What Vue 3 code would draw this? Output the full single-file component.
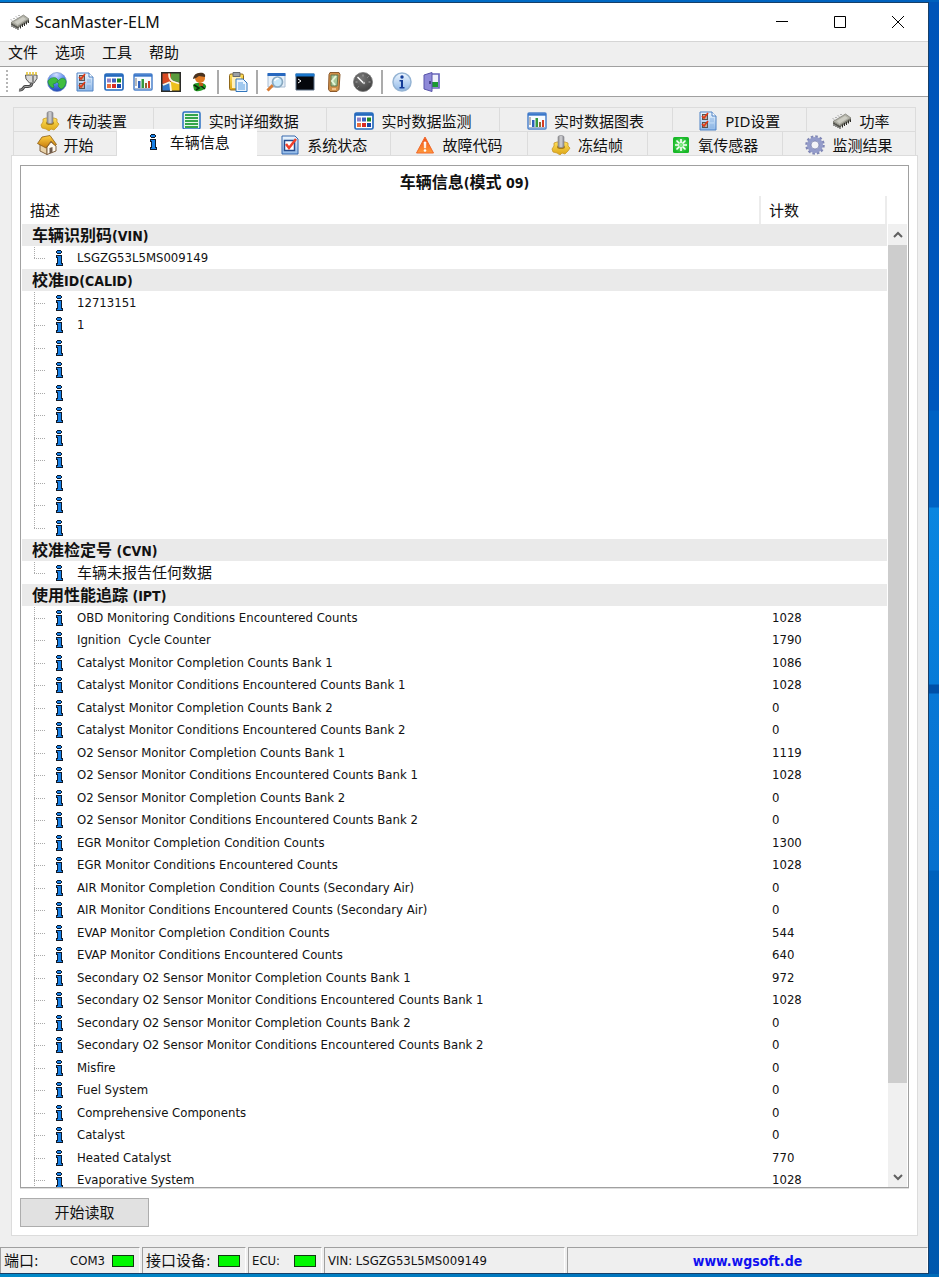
<script setup>
import { ref } from 'vue'

const menus = ['文件', '选项', '工具', '帮助']
const toolGroups = [
  { size: 'seven', items: [['plug', '连接'], ['globe', '网站'], ['checklist', 'PID设置'], ['grid', '实时数据监测'], ['chart', '实时数据图表'], ['squares', '面板'], ['person', '用户']] },
  { size: 'one', items: [['paste', '粘贴']] },
  { size: 'four', items: [['search', '查找'], ['terminal', '终端'], ['device', '设备'], ['gauge', '仪表']] },
  { size: 'two', items: [['about', '关于'], ['door', '退出']] }
]
const upperTabs = [
  ['knob', '传动装置'], ['list', '实时详细数据'], ['grid', '实时数据监测'],
  ['chart', '实时数据图表'], ['checklist', 'PID设置'], ['chip', '功率']
]
const lowerTabs = [
  ['house', '开始'], ['info', '车辆信息'], ['check', '系统状态'], ['warning', '故障代码'],
  ['knob', '冻结帧'], ['sensor', '氧传感器'], ['gear', '监测结果']
]
const activeTab = ref('车辆信息')

const sections = [
  { cjk: '车辆识别码', latin: '(VIN)', rows: [['LSGZG53L5MS009149', '']] },
  { cjk: '校准', latin: 'ID(CALID)', rows: [['12713151', ''], ['1', ''], ...Array.from({ length: 9 }, () => ['', ''])] },
  { cjk: '校准检定号', latin: ' (CVN)', chinese: true, rows: [['车辆未报告任何数据', '']] },
  {
    cjk: '使用性能追踪', latin: ' (IPT)', open: true, rows: [
      ['OBD Monitoring Conditions Encountered Counts', '1028'],
      ['Ignition  Cycle Counter', '1790'],
      ['Catalyst Monitor Completion Counts Bank 1', '1086'],
      ['Catalyst Monitor Conditions Encountered Counts Bank 1', '1028'],
      ['Catalyst Monitor Completion Counts Bank 2', '0'],
      ['Catalyst Monitor Conditions Encountered Counts Bank 2', '0'],
      ['O2 Sensor Monitor Completion Counts Bank 1', '1119'],
      ['O2 Sensor Monitor Conditions Encountered Counts Bank 1', '1028'],
      ['O2 Sensor Monitor Completion Counts Bank 2', '0'],
      ['O2 Sensor Monitor Conditions Encountered Counts Bank 2', '0'],
      ['EGR Monitor Completion Condition Counts', '1300'],
      ['EGR Monitor Conditions Encountered Counts', '1028'],
      ['AIR Monitor Completion Condition Counts (Secondary Air)', '0'],
      ['AIR Monitor Conditions Encountered Counts (Secondary Air)', '0'],
      ['EVAP Monitor Completion Condition Counts', '544'],
      ['EVAP Monitor Conditions Encountered Counts', '640'],
      ['Secondary O2 Sensor Monitor Completion Counts Bank 1', '972'],
      ['Secondary O2 Sensor Monitor Conditions Encountered Counts Bank 1', '1028'],
      ['Secondary O2 Sensor Monitor Completion Counts Bank 2', '0'],
      ['Secondary O2 Sensor Monitor Conditions Encountered Counts Bank 2', '0'],
      ['Misfire', '0'],
      ['Fuel System', '0'],
      ['Comprehensive Components', '0'],
      ['Catalyst', '0'],
      ['Heated Catalyst', '770'],
      ['Evaporative System', '1028']
    ]
  }
]
const lines = sections.flatMap(s => [
  { head: true, cjk: s.cjk, latin: s.latin },
  ...s.rows.map(([name, count], i) => ({ name, count, chinese: s.chinese, last: !s.open && i === s.rows.length - 1 }))
])
</script>

<template>
  <svg class="sprites" aria-hidden="true">
    <defs>
      <linearGradient id="g-blue" x1="0" y1="0" x2="0" y2="1"><stop offset="0" stop-color="#eef7ff" /><stop offset="1" stop-color="#8fb8e8" /></linearGradient>
      <linearGradient id="g-gold" x1="0" y1="0" x2="0" y2="1"><stop offset="0" stop-color="#ffe05a" /><stop offset="1" stop-color="#dba414" /></linearGradient>
      <linearGradient id="g-roof" x1="0" y1="0" x2="0" y2="1"><stop offset="0" stop-color="#ffd040" /><stop offset="1" stop-color="#c67a0c" /></linearGradient>
      <linearGradient id="g-steel" x1="0" y1="0" x2="1" y2="0"><stop offset="0" stop-color="#8a8a8a" /><stop offset=".5" stop-color="#d5d5d8" /><stop offset="1" stop-color="#85858c" /></linearGradient>
      <linearGradient id="g-orange" x1="0" y1="0" x2="0" y2="1"><stop offset="0" stop-color="#f04a18" /><stop offset="1" stop-color="#ff9a3a" /></linearGradient>
      <radialGradient id="g-globe" cx=".45" cy=".1" r=".9"><stop offset="0" stop-color="#d5e2ff" /><stop offset=".5" stop-color="#5b8cf0" /><stop offset="1" stop-color="#2148b4" /></radialGradient>
      <radialGradient id="g-sensor"><stop offset="0" stop-color="#8af08a" /><stop offset="1" stop-color="#18b828" /></radialGradient>
      <radialGradient id="g-gauge" cx=".4" cy=".3" r=".8"><stop offset="0" stop-color="#777" /><stop offset="1" stop-color="#3c3c3c" /></radialGradient>
    </defs>
    <symbol id="i-chip" viewBox="0 0 20 20">
      <path d="M1 10.500v2l6.500 4L19 9.500V7z" fill="#77776f" />
      <path d="M2 12v3M4 13v3M6 14v3M8 15v3M10.500 13.500v3M12.500 12v3M14.500 11v3M16.500 9.500v3M18.500 8.500v2.500" stroke="#2c2c28" />
      <path d="M1 10.500L13.500 3l5.500 4L7.500 14.500z" fill="#b2b2a8" stroke="#77776f" stroke-width=".7" /><path d="M4.500 10L13 5l3 2-8.500 5.500z" fill="#cdcdc4" />
      <path d="M2 8.500l-1-1M4.500 7l-1-1M7 5.500l-1-1M9.500 4l-1-1" stroke="#555" stroke-width=".8" />
    </symbol>
    <symbol id="i-plug" viewBox="0 0 20 20">
      <path d="M14 10c0 4-2 4.500-4 4.500H7c-2 0-1 4-6 3.500" fill="none" stroke="#444" stroke-width="2.800" /><path d="M14 10c0 4-2 4.500-4 4.500H7c-2 0-1 4-6 3.500" fill="none" stroke="#aaa" />
      <path d="M7.500 3H19v3.500L16 11h-4.500L8 7z" fill="#d8d8d8" stroke="#555" /><path d="M9 0v3M12 0v3M15 0v3M18 0v3" stroke="#e3c435" stroke-width="1.600" /><path d="M15 4v6" stroke="#8a8a8a" stroke-width="2" />
    </symbol>
    <symbol id="i-globe" viewBox="0 0 20 20">
      <circle cx="10" cy="10" r="9.500" fill="url(#g-globe)" stroke="#6a86c6" stroke-width=".6" /><path d="M1 9c2-3 5-4 8-3l2 2-2 3-3 1 1 3-1 1c-3-1-5-4-5-7zM12 8c3-3 6-2 7 1 0 4-2 7-5 8l-3-3 1-2-2-2z" fill="#3fbd3f" stroke="#1b8a2c" stroke-width=".6" />
    </symbol>
    <symbol id="i-checklist" viewBox="0 0 20 20">
      <path d="M2 1h12l4 4v14H2z" fill="url(#g-blue)" stroke="#4e82c4" /><path d="M14 1v4h4" fill="#fff" stroke="#4e82c4" /><path d="M4 3h6v6H4zM4 11h6v6H4z" fill="#555" /><path d="M5 4h4v4H5zM5 12h4v4H5z" fill="#b9aca2" /><path d="M4 5l2 2 4-5M4 13l2 2 4-5" fill="none" stroke="#e33914" stroke-width="1.700" /><path d="M12 8h4M12 10h4M12 14h4M12 16h4" stroke="#8cb4e2" />
    </symbol>
    <symbol id="i-grid" viewBox="0 0 20 20">
      <rect x="1" y="2" width="18" height="16" rx="1.500" fill="#fff" stroke="#2469bd" stroke-width="1.700" /><path d="M1 3.500h18" stroke="#2469bd" stroke-width="2.600" />
      <path d="M3 6.500h4v4H3z" fill="#8d7fc6" /><path d="M8 6.500h4v4H8z" fill="#3c5fc0" /><path d="M13 6.500h4v4h-4z" fill="#208820" /><path d="M3 12h4v4H3z" fill="#e96c3a" /><path d="M8 12h4v4H8z" fill="#d92c24" /><path d="M13 12h4v4h-4z" fill="#1946a8" />
    </symbol>
    <symbol id="i-chart" viewBox="0 0 20 20">
      <rect x="1" y="2" width="18" height="16" rx="1" fill="#f7fbff" stroke="#4e83cb" stroke-width="1.500" /><path d="M1 3.500h18" stroke="#3a77ca" stroke-width="2.400" /><path d="M2 7h2M2 9h2M2 11h2M2 13h2" stroke="#777" /><path d="M5 9h2.500v7H5z" fill="#2c60bb" /><path d="M8.500 7H11v9H8.500z" fill="#349a3f" /><path d="M12 11h2v5h-2z" fill="#8e6531" /><path d="M15 9h2v7h-2z" fill="#d63b22" /><path d="M2 16.500h16" stroke="#a8b8cd" />
    </symbol>
    <symbol id="i-squares" viewBox="0 0 20 20">
      <path d="M0 0h20v20H0z" fill="#2b2b28" /><path d="M1.500 1.500H10v8l-8.500 3z" fill="#d84a22" /><path d="M10 1.500h8.500v9L10 8z" fill="#5a9a3c" /><path d="M1.500 12L9 10l1 8.500H1.500z" fill="#3478c8" /><path d="M10 9l8.500 2v7.500H10z" fill="#efc01d" />
      <path d="M8 1.500c0 4 1 7 4 8l6 2M2 13l7-3M9 10l1 9" fill="none" stroke="#fff6df" stroke-width="1.800" />
    </symbol>
    <symbol id="i-person" viewBox="0 0 20 20">
      <path d="M3 13c2-3 12-3 13 1 1 4-9 7-12 4z" fill="#259a25" /><path d="M4 13l5 3-3 2M10 13l5 4" fill="none" stroke="#0b2a0b" stroke-width="1.600" /><circle cx="10" cy="6" r="5" fill="#e07a24" /><path d="M3 7c0-2 2-6 6-6 4-1 7 1 6 4l-6-1-3 2z" fill="#4a3320" /><path d="M9 11h4v3H9z" fill="#b85a18" />
    </symbol>
    <symbol id="i-paste" viewBox="0 0 20 20">
      <rect x="1.500" y="2" width="14" height="16" rx="1.500" fill="url(#g-gold)" stroke="#90681a" /><path d="M5 .500h7v4H5z" fill="#9ba0a6" stroke="#66696c" /><path d="M4 5h9v11H4z" fill="#fff0b8" /><path d="M8 7h7l4 4v8.500H8z" fill="#eaf5ff" stroke="#3276bd" /><path d="M10 11h5M10 13h7M10 15h7M10 17h7" stroke="#579de0" />
    </symbol>
    <symbol id="i-search" viewBox="0 0 20 20">
      <path d="M2 2h17v13H2z" fill="#e8f0f8" stroke="#a8bdd4" /><path d="M1.500 2.500h18" stroke="#2768bf" stroke-width="3" /><path d="M7 13l-5.500 5.500" stroke="#d87c33" stroke-width="3" /><circle cx="11.500" cy="10" r="5" fill="#c9e9fb" stroke="#88a8c0" stroke-width="1.700" /><path d="M8.500 9c1-2 3-3 4-2" fill="none" stroke="#fff" stroke-width="1.500" />
    </symbol>
    <symbol id="i-terminal" viewBox="0 0 20 20"><path d="M1 2h18v16H1z" fill="#05070c" stroke="#5b6e86" /><path d="M.500 3h19" stroke="#1976cc" stroke-width="3" /><path d="M3 7l3 2-3 2" fill="none" stroke="#fff" /></symbol>
    <symbol id="i-device" viewBox="0 0 20 20"><path d="M6 .500h9l1 2-1 15-2 2H6l-1.500-2 .5-15z" fill="#cf8f48" stroke="#8b5a2c" /><path d="M7 3h7l-1 11H7z" fill="#a8c89a" stroke="#63774e" /><path d="M12 4l-4 5 3 4" fill="none" stroke="#e5f5d8" stroke-width="2" /><path d="M8 17h4" stroke="#f3c18a" stroke-width="2" /></symbol>
    <symbol id="i-gauge" viewBox="0 0 20 20"><circle cx="10" cy="10" r="9.500" fill="url(#g-gauge)" stroke="#777" stroke-width=".8" /><path d="M4.500 5l6 6" stroke="#fff" stroke-width="1.500" /><path d="M2.500 10h2M15.500 10h2M10 2.500v2M15.500 4.500l-1 1M4.500 15.500l1-1" stroke="#aaa" /><circle cx="11" cy="11" r="1.200" fill="#bbb" /></symbol>
    <symbol id="i-about" viewBox="0 0 20 20"><circle cx="10" cy="10" r="9" fill="url(#g-blue)" stroke="#95b4d4" stroke-width="1.500" /><circle cx="10" cy="5" r="1.700" fill="#143c98" /><path d="M7.500 8H11v7h1.500v1.500h-5V15H9V9.500H7.500z" fill="#143c98" /></symbol>
    <symbol id="i-door" viewBox="0 0 20 20"><path d="M8 2h10v14H8z" fill="#eef0fb" stroke="#6967bc" stroke-width="1.700" /><path d="M11 10h6v5h-6z" fill="#1c9a32" /><path d="M3 3l8-2.500v19L3 17z" fill="#8e89d8" stroke="#5854a9" /><path d="M9 9v3" stroke="#332d75" stroke-width="1.500" /></symbol>
    <symbol id="i-knob" viewBox="0 0 20 20"><path d="M3 8l3-1h8l3 1v3l2 2-2 3-3 3-3-1-2 2-3-2-4-1-1-3 2-3z" fill="url(#g-gold)" stroke="#c8982a" stroke-width=".8" /><ellipse cx="10" cy="12" rx="4" ry="2" fill="#a77d18" /><path d="M7 2c0-2 6-2 6 0v9c0 2-6 2-6 0z" fill="url(#g-steel)" stroke="#85858c" stroke-width=".6" /></symbol>
    <symbol id="i-list" viewBox="0 0 20 20"><rect x="1" y="1" width="17" height="17" rx="1.500" fill="#e8f8eb" stroke="#2b70c4" stroke-width="1.500" /><path d="M3 4h13M3 7h13M3 10h13M3 13h13M3 16h13" stroke="#35a54b" stroke-width="2" /></symbol>
    <symbol id="i-house" viewBox="0 0 20 20"><path d="M3 9l7 3v7.500L3 16z" fill="#e9d2a8" stroke="#806241" /><path d="M10 12l4-5 5 4v5l-9 3.500z" fill="#fffaf0" stroke="#806241" /><path d="M.500 8.500L5 2l8-1.500 6.500 9-1.500 1L14 6l-5 7z" fill="url(#g-roof)" stroke="#8a5a14" stroke-width=".8" /><path d="M12.500 13l3-1v5.500l-3 1z" fill="#6e5a4c" /></symbol>
    <symbol id="i-info" viewBox="0 0 8 16"><path d="M2 0h4v1h1v2H6v1H2V3H1V1h1z" fill="#101a29" /><path d="M2 1h4v2H2z" fill="#1680e6" /><path d="M1 5h6v8h1v3H1v-3h1V8H1z" fill="#101a29" /><path d="M2 6h4v8h1v1H2v-1h1V7H2z" fill="#1680e6" /></symbol>
    <symbol id="i-check" viewBox="0 0 20 20"><path d="M2 1h13l3 3v15H2z" fill="url(#g-blue)" stroke="#3567ac" /><path d="M4.500 5.500h10v10h-10z" fill="#fff" stroke="#254b8c" stroke-width="1.500" /><path d="M6 9l3 4 7-9" fill="none" stroke="#f0402a" stroke-width="2.500" /></symbol>
    <symbol id="i-warning" viewBox="0 0 20 20"><path d="M10 2l8.500 16h-17z" fill="url(#g-orange)" stroke="#f0682a" stroke-linejoin="round" /><path d="M9 7h2l-.4 6H9.400z" fill="#fff" stroke="#fff" stroke-width=".6" /><circle cx="10" cy="15.500" r="1.300" fill="#fff" /></symbol>
    <symbol id="i-sensor" viewBox="0 0 20 20"><rect x="2" y="2" width="16" height="16" rx="1.500" fill="url(#g-sensor)" /><path d="M10 4v4M10 12v4M4 10h4M12 10h4M5.500 5.500l3 3M14.500 5.500l-3 3M5.500 14.500l3-3M14.500 14.500l-3-3" stroke="#fff" stroke-width="1.600" /></symbol>
    <symbol id="i-gear" viewBox="0 0 20 20"><circle cx="10" cy="10" r="8.500" fill="none" stroke="#7f86b5" stroke-width="2.500" stroke-dasharray="2.500 1.950" /><circle cx="10" cy="10" r="6" fill="none" stroke="#949cca" stroke-width="4" /><circle cx="10" cy="10" r="4" fill="#f4f4f8" stroke="#737aa8" stroke-width=".7" /></symbol>
  </svg>

  <div class="desktop">
    <div class="window">
      <header class="titlebar">
        <svg class="icon"><use href="#i-chip" /></svg>
        <span class="app-name">ScanMaster-ELM</span>
        <button type="button" class="caption-btn" aria-label="最小化"><svg viewBox="0 0 12 12"><path d="M0 5.500h12" /></svg></button>
        <button type="button" class="caption-btn" aria-label="最大化"><svg viewBox="0 0 12 12"><path d="M.5.5h11v11H.5z" /></svg></button>
        <button type="button" class="caption-btn" aria-label="关闭"><svg viewBox="0 0 12 12"><path d="M0 0l12 12M12 0L0 12" /></svg></button>
      </header>

      <nav class="menubar"><button v-for="m in menus" :key="m" type="button">{{ m }}</button></nav>

      <div class="toolbar">
        <span class="grip"></span>
        <div v-for="g in toolGroups" :key="g.size" class="tools" :class="g.size">
          <button v-for="[icon, label] in g.items" :key="icon" type="button" :aria-label="label"><svg class="icon"><use :href="'#i-' + icon" /></svg></button>
        </div>
      </div>

      <main class="main">
        <div class="tabs" role="tablist">
          <div class="tab-row upper">
            <button v-for="[icon, label] in upperTabs" :key="label" type="button" role="tab" class="tab" :aria-selected="activeTab === label" @click="activeTab = label">
              <svg class="icon"><use :href="'#i-' + icon" /></svg>{{ label }}
            </button>
          </div>
          <div class="tab-row lower">
            <button v-for="[icon, label] in lowerTabs" :key="label" type="button" role="tab" class="tab" :class="{ active: activeTab === label }" :aria-selected="activeTab === label" @click="activeTab = label">
              <svg class="icon" :class="{ low: icon === 'info' }"><use :href="'#i-' + icon" /></svg>{{ label }}
            </button>
          </div>
        </div>

        <section class="panel">
          <div class="listbox">
            <h1><span class="cjk">车辆信息</span>(<span class="cjk">模式</span> 09)</h1>
            <div class="list-body">
              <div class="viewport">
                <table>
                  <colgroup><col /><col class="count-col" /></colgroup>
                  <thead><tr><th scope="col">描述</th><th scope="col">计数</th></tr></thead>
                  <tbody>
                    <tr v-for="(line, i) in lines" :key="i" :class="{ head: line.head }">
                      <th v-if="line.head" colspan="2" scope="rowgroup"><span class="cjk">{{ line.cjk }}</span>{{ line.latin }}</th>
                      <template v-else>
                        <td>
                          <div class="item">
                            <span class="branch" :class="{ last: line.last }"></span>
                            <svg class="info"><use href="#i-info" /></svg>
                            <span :class="{ chinese: line.chinese }">{{ line.name }}</span>
                          </div>
                        </td>
                        <td class="count">{{ line.count }}</td>
                      </template>
                    </tr>
                  </tbody>
                </table>
              </div>
              <div class="scrollbar">
                <button type="button" aria-label="向上滚动"><svg viewBox="0 0 10 8"><path d="M1 6l4-4 4 4" /></svg></button>
                <div class="track"><div class="thumb"></div></div>
                <button type="button" aria-label="向下滚动"><svg viewBox="0 0 10 8"><path d="M1 2l4 4 4-4" /></svg></button>
              </div>
            </div>
          </div>
          <button type="button" class="read">开始读取</button>
        </section>
      </main>

      <footer class="status">
        <div class="pane port"><span class="chinese">端口:</span><span class="value">COM3</span><i class="led"></i></div>
        <div class="pane iface"><span class="chinese">接口设备:</span><i class="led"></i></div>
        <div class="pane ecu"><span>ECU:</span><i class="led"></i></div>
        <div class="pane vin">VIN: LSGZG53L5MS009149</div>
        <div class="pane site"><a href="http://www.wgsoft.de">www.wgsoft.de</a></div>
      </footer>
    </div>
  </div>
</template>

<style>
body { margin: 0; }
</style>

<style scoped>
.sprites { position: absolute; width: 0; height: 0; }
.desktop {
  box-sizing: border-box; height: 100vh; padding: 2px 10px 3px 0;
  font-family: "DejaVu Sans Condensed", "Noto Sans CJK SC", sans-serif; font-size: 13px; line-height: 20px; color: #111;
  background:
    linear-gradient(90deg, #0078cf, #0060bd) top / 100% 2px no-repeat,
    linear-gradient(90deg, #0089c8, #006bb8) bottom / 100% 3px no-repeat,
    linear-gradient(#0054b8 0, #0057bd 410px, #0062c4 411px, #0062c4 507px, #0a86e0 508px, #067bd8 684px, #0050a8 685px, #0050a8 693px, #0878d6 694px, #0670ce 870px, #0062bd 871px, #0058ad);
}
button { margin: 0; padding: 0; border: 0; background: none; font: inherit; color: inherit; }
.window { box-sizing: border-box; height: 100%; display: flex; flex-direction: column; border: 1px solid #173f68; border-left: 0; background: #efefef; }
.icon { width: 20px; height: 20px; flex: none; }

.titlebar { display: flex; align-items: center; height: 38px; padding: 0 1px 0 10px; background: #fff; border-bottom: 1px solid #d5d5d5; }
.app-name { flex: 1; margin-left: 5px; font-family: "Noto Sans", sans-serif; font-size: 16px; }
.caption-btn { width: 58px; height: 38px; display: flex; align-items: center; justify-content: center; }
.caption-btn svg { width: 12px; height: 12px; }
.caption-btn path { fill: none; stroke: #000; stroke-width: 1; }

.menubar { box-sizing: border-box; display: flex; align-items: flex-start; gap: 17px; height: 25px; padding: 1px 0 0 8px; border-bottom: 1px solid #a0a0a0; font-size: 15px; }
.toolbar { display: flex; align-items: center; height: 29px; background: #fff; border-bottom: 1px solid #a0a0a0; }
.grip { width: 2px; height: 24px; margin: 0 6px; background: repeating-linear-gradient(#b5b5b5 0 2px, #fff 2px 4px); }
.tools { display: flex; height: 24px; padding-right: 4px; margin-right: 4px; border-right: 2px solid #ababab; }
.tools button { flex: 1; display: flex; align-items: center; justify-content: center; }
.seven { width: 200px; padding-right: 3px; }
.one { width: 29px; }
.four { width: 115px; }
.two { width: 58px; border: 0; }

.main { flex: 1; min-height: 0; display: flex; flex-direction: column; padding: 10px 10px 11px 11px; }
.tabs { padding: 0 2px; font-family: "Noto Sans", "Noto Sans CJK SC", sans-serif; font-size: 15px; }
.tab-row { display: grid; }
.upper { grid-template-columns: 141fr 173fr 172fr 173fr 134fr 109fr; }
.lower { grid-template-columns: 104fr 140fr 134fr 136fr 120fr 135fr 133fr; }
.tab { box-sizing: border-box; height: 24px; padding: 2px 0 0; display: flex; align-items: center; justify-content: center; gap: 7px; border: solid #dcdcdc; border-width: 1px 1px 0 0; white-space: nowrap; }
.tab:first-child { border-left-width: 1px; }
.tab.active { position: relative; height: 27px; margin: -2px 0 -1px; padding: 0 2px 2px 0; background: #fff; border: 0; }
.icon.low { height: 16px; }
.panel { flex: 1; min-height: 0; display: flex; flex-direction: column; gap: 10px; padding: 9px 8px 8px; background: #fff; border: 1px solid #dcdcdc; }
.listbox { flex: 1; min-height: 0; display: flex; flex-direction: column; border: 1px solid #a0a0a0; box-shadow: 0 1px #dedede; }
h1 { margin: 0; height: 30px; line-height: 34px; font-size: 14px; font-weight: 700; text-align: center; }
.cjk { font-size: 16px; }
.chinese { font-size: 15px; }
.list-body { flex: 1; min-height: 0; display: flex; padding-left: 1px; }
.viewport { flex: 1; overflow: hidden; }
table { width: 100%; table-layout: fixed; border-collapse: separate; border-spacing: 0; }
.count-col { width: 126px; }
th, td { padding: 0; text-align: left; white-space: pre; overflow: hidden; }
thead th { height: 28px; padding: 2px 0 0 8px; box-sizing: border-box; border-right: 2px solid #ececec; font-size: 15px; font-weight: 400; }
tbody tr { height: 22px; }
tbody tr:nth-child(even) { height: 23px; }
tbody td { line-height: 22px; }
tbody th { height: 22px; box-sizing: border-box; padding: 2px 0 0 10px; background: #eaeaea; font-size: 14px; line-height: 20px; }
tbody th .cjk { line-height: 18px; }
.item { display: flex; align-items: center; height: 22px; padding-left: 12px; }
.branch {
  width: 12px; height: 100%; flex: none;
  background:
    repeating-linear-gradient(#aaa 0 1px, transparent 1px 2px) 0 0 / 1px 100% no-repeat,
    repeating-linear-gradient(90deg, #aaa 0 1px, transparent 1px 2px) 0 11px / 12px 1px no-repeat;
}
.branch.last { background-size: 1px 11px, 12px 1px; }
.info { width: 8px; height: 16px; margin: 0 14px 0 9px; flex: none; }
.count { padding-left: 11px; }

.scrollbar { width: 19px; margin: 28px 1px 0; display: flex; flex-direction: column; background: #f0f0f0; }
.scrollbar button { height: 21px; display: flex; align-items: center; justify-content: center; }
.scrollbar svg { width: 10px; height: 8px; }
.scrollbar path { fill: none; stroke: #606060; stroke-width: 2; }
.track { flex: 1; }
.thumb { height: 91%; background: #cdcdcd; }
.read { width: 129px; height: 29px; border: 1px solid #adadad; background: #e1e1e1; font-size: 15px; }

.status { display: flex; gap: 2px; height: 26px; }
.pane { display: flex; align-items: center; box-sizing: border-box; padding-left: 3px; border: solid #a0a0a0; border-width: 1px 0 0 1px; border-right: 1px solid #fff; white-space: nowrap; }
.port { width: 140px; }
.value { margin-left: auto; }
.led { box-sizing: border-box; width: 22px; height: 12px; margin: 0 5px 0 auto; border: 1px solid #123b12; background: #00f800; }
.value + .led { margin-left: 7px; }
.iface { width: 104px; }
.ecu { width: 74px; }
.vin { width: 241px; }
.site { flex: 1; justify-content: center; padding: 0; }
.site a { color: #1010f0; font-size: 14px; font-weight: 700; text-decoration: none; }
</style>
